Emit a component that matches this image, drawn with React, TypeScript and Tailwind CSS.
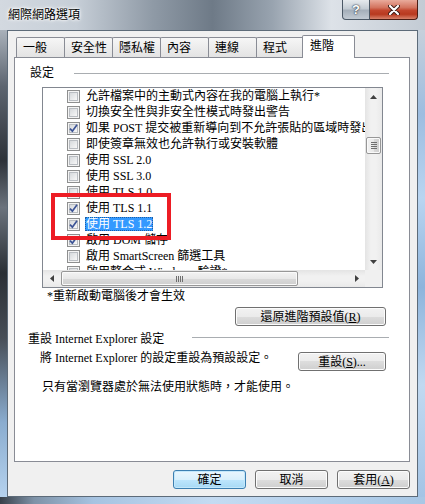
import React from 'react';

interface Row {
  label: string;
  checked?: boolean;
  selected?: boolean;
}

const rows: Row[] = [
  { label: '允許檔案中的主動式內容在我的電腦上執行*' },
  { label: '切換安全性與非安全性模式時發出警告' },
  { label: '如果 POST 提交被重新導向到不允許張貼的區域時發出警告', checked: true },
  { label: '即使簽章無效也允許執行或安裝軟體' },
  { label: '使用 SSL 2.0' },
  { label: '使用 SSL 3.0' },
  { label: '使用 TLS 1.0' },
  { label: '使用 TLS 1.1', checked: true },
  { label: '使用 TLS 1.2', checked: true, selected: true },
  { label: '啟用 DOM 儲存', checked: true },
  { label: '啟用 SmartScreen 篩選工具' },
  { label: '啟用整合式 Windows 驗證*' },
];

const tabs = ['一般', '安全性', '隱私權', '內容', '連線', '程式'];

function CheckBox({ checked }: { checked?: boolean }) {
  return (
    <span className="flex h-[13px] w-[13px] shrink-0 items-center justify-center border border-[#8e8f8f] bg-[#f4f4f4]">
      <span className="flex h-[9px] w-[9px] items-center justify-center border border-[#b9bdc2] bg-[linear-gradient(135deg,#d6d9dc,#f8f8f8)]">
        {checked && (
          <svg width="9" height="9" viewBox="0 0 9 9" className="overflow-visible">
            <path d="M1 4.6 L3.4 7.2 L8 0.8" fill="none" stroke="#3d5496" strokeWidth="1.7" />
          </svg>
        )}
      </span>
    </span>
  );
}

function Arrow({ dir }: { dir: 'up' | 'down' | 'left' | 'right' }) {
  const pts = {
    up: '3.5,0 7,4 0,4',
    down: '0,0 7,0 3.5,4',
    left: '4,0 4,7 0,3.5',
    right: '0,0 4,3.5 0,7',
  }[dir];
  const vertical = dir === 'up' || dir === 'down';
  return (
    <svg width={vertical ? 7 : 4} height={vertical ? 4 : 7} viewBox={vertical ? '0 0 7 4' : '0 0 4 7'}>
      <polygon points={pts} fill="#404040" />
    </svg>
  );
}

function WinButton({
  children,
  className = '',
  primary,
}: {
  children: React.ReactNode;
  className?: string;
  primary?: boolean;
}) {
  return (
    <button
      className={`flex h-[19px] items-center justify-center rounded-[3px] border text-[12px] leading-none text-black ${
        primary
          ? 'border-[#3c7fb1] bg-[linear-gradient(#eaf6fd_0%,#d9f0fc_50%,#bee6fd_50%,#a7d9f5_100%)] shadow-[inset_0_0_0_1px_#c4e8fb]'
          : 'border-[#707070] bg-[linear-gradient(#f2f2f2_0%,#ebebeb_50%,#dddddd_50%,#cfcfcf_100%)] shadow-[inset_0_0_0_1px_#fcfcfc]'
      } ${className}`}
    >
      {children}
    </button>
  );
}

export default function App() {
  return (
    <div className="flex h-[504px] w-[425px] flex-col overflow-hidden bg-[#9aa8b6] text-[12px] text-black font-['Liberation_Serif','Noto_Sans_CJK_TC',serif]">
      {/* 標題列 */}
      <div className="flex h-[30px] shrink-0 items-start bg-[linear-gradient(90deg,#d3d9e0_0%,#c6ced7_18%,#8f9aa6_36%,#6e7a87_50%,#98a3af_64%,#dde2e8_78%,#c3cbd4_100%)]">
        <span className="ml-[8px] mt-[8px] leading-[14px] [text-shadow:0_0_5px_#fff,0_0_3px_#fff,0_0_2px_#fff]">
          網際網路選項
        </span>
        <div className="ml-auto mr-[7px] flex h-[20px]">
          <div className="flex w-[28px] items-center justify-center rounded-bl-[4px] border border-t-0 border-[#4b5866] bg-[linear-gradient(#e6eaee_0%,#c4ccd4_45%,#a5afba_55%,#c2cad3_100%)] font-['Liberation_Sans',sans-serif] text-[13px] font-bold text-white [text-shadow:0_0_2px_#243040,0_0_1px_#243040]">
            ?
          </div>
          <div className="flex w-[48px] items-center justify-center rounded-br-[4px] border border-t-0 border-l-0 border-[#4a1d15] bg-[linear-gradient(#e9ab9c_0%,#d3735e_40%,#c2452d_55%,#b8391f_75%,#d8826b_100%)]">
            <svg width="12" height="10" viewBox="0 0 12 10">
              <path d="M2 1 L10 9 M10 1 L2 9" stroke="#3a1a14" strokeWidth="4" strokeLinecap="round" />
              <path d="M2 1 L10 9 M10 1 L2 9" stroke="#ffffff" strokeWidth="2.2" strokeLinecap="round" />
            </svg>
          </div>
        </div>
      </div>

      <div className="flex h-[467px] shrink-0">
        <div className="w-[7px] bg-[linear-gradient(180deg,#a9b1ba_0%,#5d6570_12%,#2d3239_28%,#6b737d_38%,#2a2f35_52%,#474e57_66%,#8aaccf_84%,#b5d2ee_100%)]" />

        {/* 內容區 */}
        <div className="flex w-[411px] flex-col border border-[#5d6b79] bg-[#f0f0f0]">
          {/* 索引標籤 */}
          <div className="ml-[8px] mt-[4px] flex h-[22px] items-end">
            {tabs.map((t, i) => (
              <div
                key={t}
                className={`flex h-[20px] w-[49px] items-center rounded-t-[2px] border border-b-0 border-[#898c95] bg-[linear-gradient(#f6f6f6,#e3e3e3)] pl-[6px] leading-none ${
                  i > 0 ? '-ml-px' : ''
                }`}
              >
                {t}
              </div>
            ))}
            <div className="relative z-10 -mb-px -ml-[3px] flex h-[23px] w-[53px] items-start rounded-t-[2px] border border-b-0 border-[#898c95] bg-white pl-[7px] pt-[4px] leading-none">
              進階
            </div>
          </div>

          {/* 索引標籤面板 */}
          <div className="ml-[6px] flex h-[405px] w-[396px] flex-col border border-[#898c95] bg-white">
            <div className="ml-[15px] mr-[20px] mt-[7px] flex h-[16px] items-center">
              <span className="leading-[16px]">設定</span>
              <span className="ml-[20px] h-px flex-1 bg-[#a9adb1]" />
            </div>

            {/* 清單方塊 */}
            <div className="ml-[27px] mt-[6px] flex h-[201px] w-[341px] flex-col border border-[#828790]">
              <div className="flex h-[182px]">
                <div className="relative flex-1 overflow-hidden bg-white">
                  {rows.map((r) => (
                    <div key={r.label} className="flex h-[16px] items-center whitespace-nowrap pl-[24px]">
                      <CheckBox checked={r.checked} />
                      <span
                        className={`ml-[5px] px-[1px] leading-[14px] ${
                          r.selected
                            ? 'bg-[#3399ff] text-white outline-1 outline-dotted outline-[#1d5fa6] -outline-offset-1'
                            : ''
                        }`}
                      >
                        {r.label}
                      </span>
                    </div>
                  ))}
                  <div className="absolute left-[8px] top-[105px] h-[47px] w-[120px] border-[4px] border-[#ed1c24]" />
                </div>
                {/* 垂直捲軸 */}
                <div className="flex w-[17px] flex-col bg-[linear-gradient(90deg,#e4e4e4,#f1f1f1_35%,#f1f1f1_65%,#e9e9e9)]">
                  <div className="flex h-[17px] items-center justify-center">
                    <Arrow dir="up" />
                  </div>
                  <div className="flex-1">
                    <div className="mx-auto mt-[32px] flex h-[17px] w-[15px] flex-col items-center justify-center gap-[1px] rounded-[2px] border border-[#979797] bg-[linear-gradient(90deg,#f3f3f3,#e8e8e8_50%,#d9d9d9_51%,#cfcfcf)] shadow-[inset_0_0_0_1px_#fafafa]">
                      <span className="h-px w-[6px] bg-[#6e6e6e]" />
                      <span className="h-px w-[6px] bg-[#6e6e6e]" />
                      <span className="h-px w-[6px] bg-[#6e6e6e]" />
                      <span className="h-px w-[6px] bg-[#6e6e6e]" />
                    </div>
                  </div>
                  <div className="flex h-[17px] items-center justify-center">
                    <Arrow dir="down" />
                  </div>
                </div>
              </div>
              {/* 水平捲軸 */}
              <div className="flex h-[17px]">
                <div className="flex flex-1 bg-[linear-gradient(180deg,#e4e4e4,#f1f1f1_35%,#f1f1f1_65%,#e9e9e9)]">
                  <div className="flex w-[17px] items-center justify-center">
                    <Arrow dir="left" />
                  </div>
                  <div className="flex-1 py-px">
                    <div className="ml-px flex h-[15px] w-[237px] items-center justify-center gap-[1px] rounded-[2px] border border-[#979797] bg-[linear-gradient(180deg,#f3f3f3,#e8e8e8_50%,#d9d9d9_51%,#cfcfcf)] shadow-[inset_0_0_0_1px_#fafafa]">
                      <span className="h-[6px] w-px bg-[#6e6e6e]" />
                      <span className="h-[6px] w-px bg-[#6e6e6e]" />
                      <span className="h-[6px] w-px bg-[#6e6e6e]" />
                      <span className="h-[6px] w-px bg-[#6e6e6e]" />
                    </div>
                  </div>
                  <div className="flex w-[17px] items-center justify-center">
                    <Arrow dir="right" />
                  </div>
                </div>
                <div className="w-[17px] bg-[#f0f0f0]" />
              </div>
            </div>

            <div className="ml-[32px] leading-[16px]">*重新啟動電腦後才會生效</div>
            <div className="mr-[23px] mt-[3px] flex justify-end">
              <WinButton className="w-[151px]">
                還原進階預設值(<u>R</u>)
              </WinButton>
            </div>

            {/* 重設 */}
            <div className="ml-[13px] mr-[20px] mt-[5px] flex h-[16px] items-start">
              <span className="leading-[16px]">重設 Internet Explorer 設定</span>
              <span className="ml-[28px] mt-[6px] h-px flex-1 bg-[#a9adb1]" />
            </div>
            <div className="mr-[23px] mt-[5px] flex items-start">
              <span className="ml-[25px] leading-[12px]">將 Internet Explorer 的設定重設為預設設定。</span>
              <WinButton className="ml-auto w-[88px]">
                重設(<u>S</u>)...
              </WinButton>
            </div>
            <div className="ml-[27px] mt-[8px] leading-[16px]">只有當瀏覽器處於無法使用狀態時，才能使用。</div>
          </div>

          {/* 對話方塊按鈕 */}
          <div className="mr-[7px] mt-[8px] flex justify-end gap-[9px]">
            <WinButton primary className="w-[73px]">
              確定
            </WinButton>
            <WinButton className="w-[73px]">取消</WinButton>
            <WinButton className="w-[73px]">
              套用(<u>A</u>)
            </WinButton>
          </div>
        </div>

        <div className="w-[7px] bg-[linear-gradient(180deg,#c6d0db_0%,#9dbde0_18%,#b9d5f1_36%,#8db4dc_55%,#c1d9f1_76%,#a4c4e5_100%)]" />
      </div>

      <div className="h-[7px] shrink-0 bg-[linear-gradient(90deg,#38404a_0%,#7e92a7_8%,#a6c3e1_22%,#c4dbf2_50%,#a8c7e5_100%)]" />
    </div>
  );
}
